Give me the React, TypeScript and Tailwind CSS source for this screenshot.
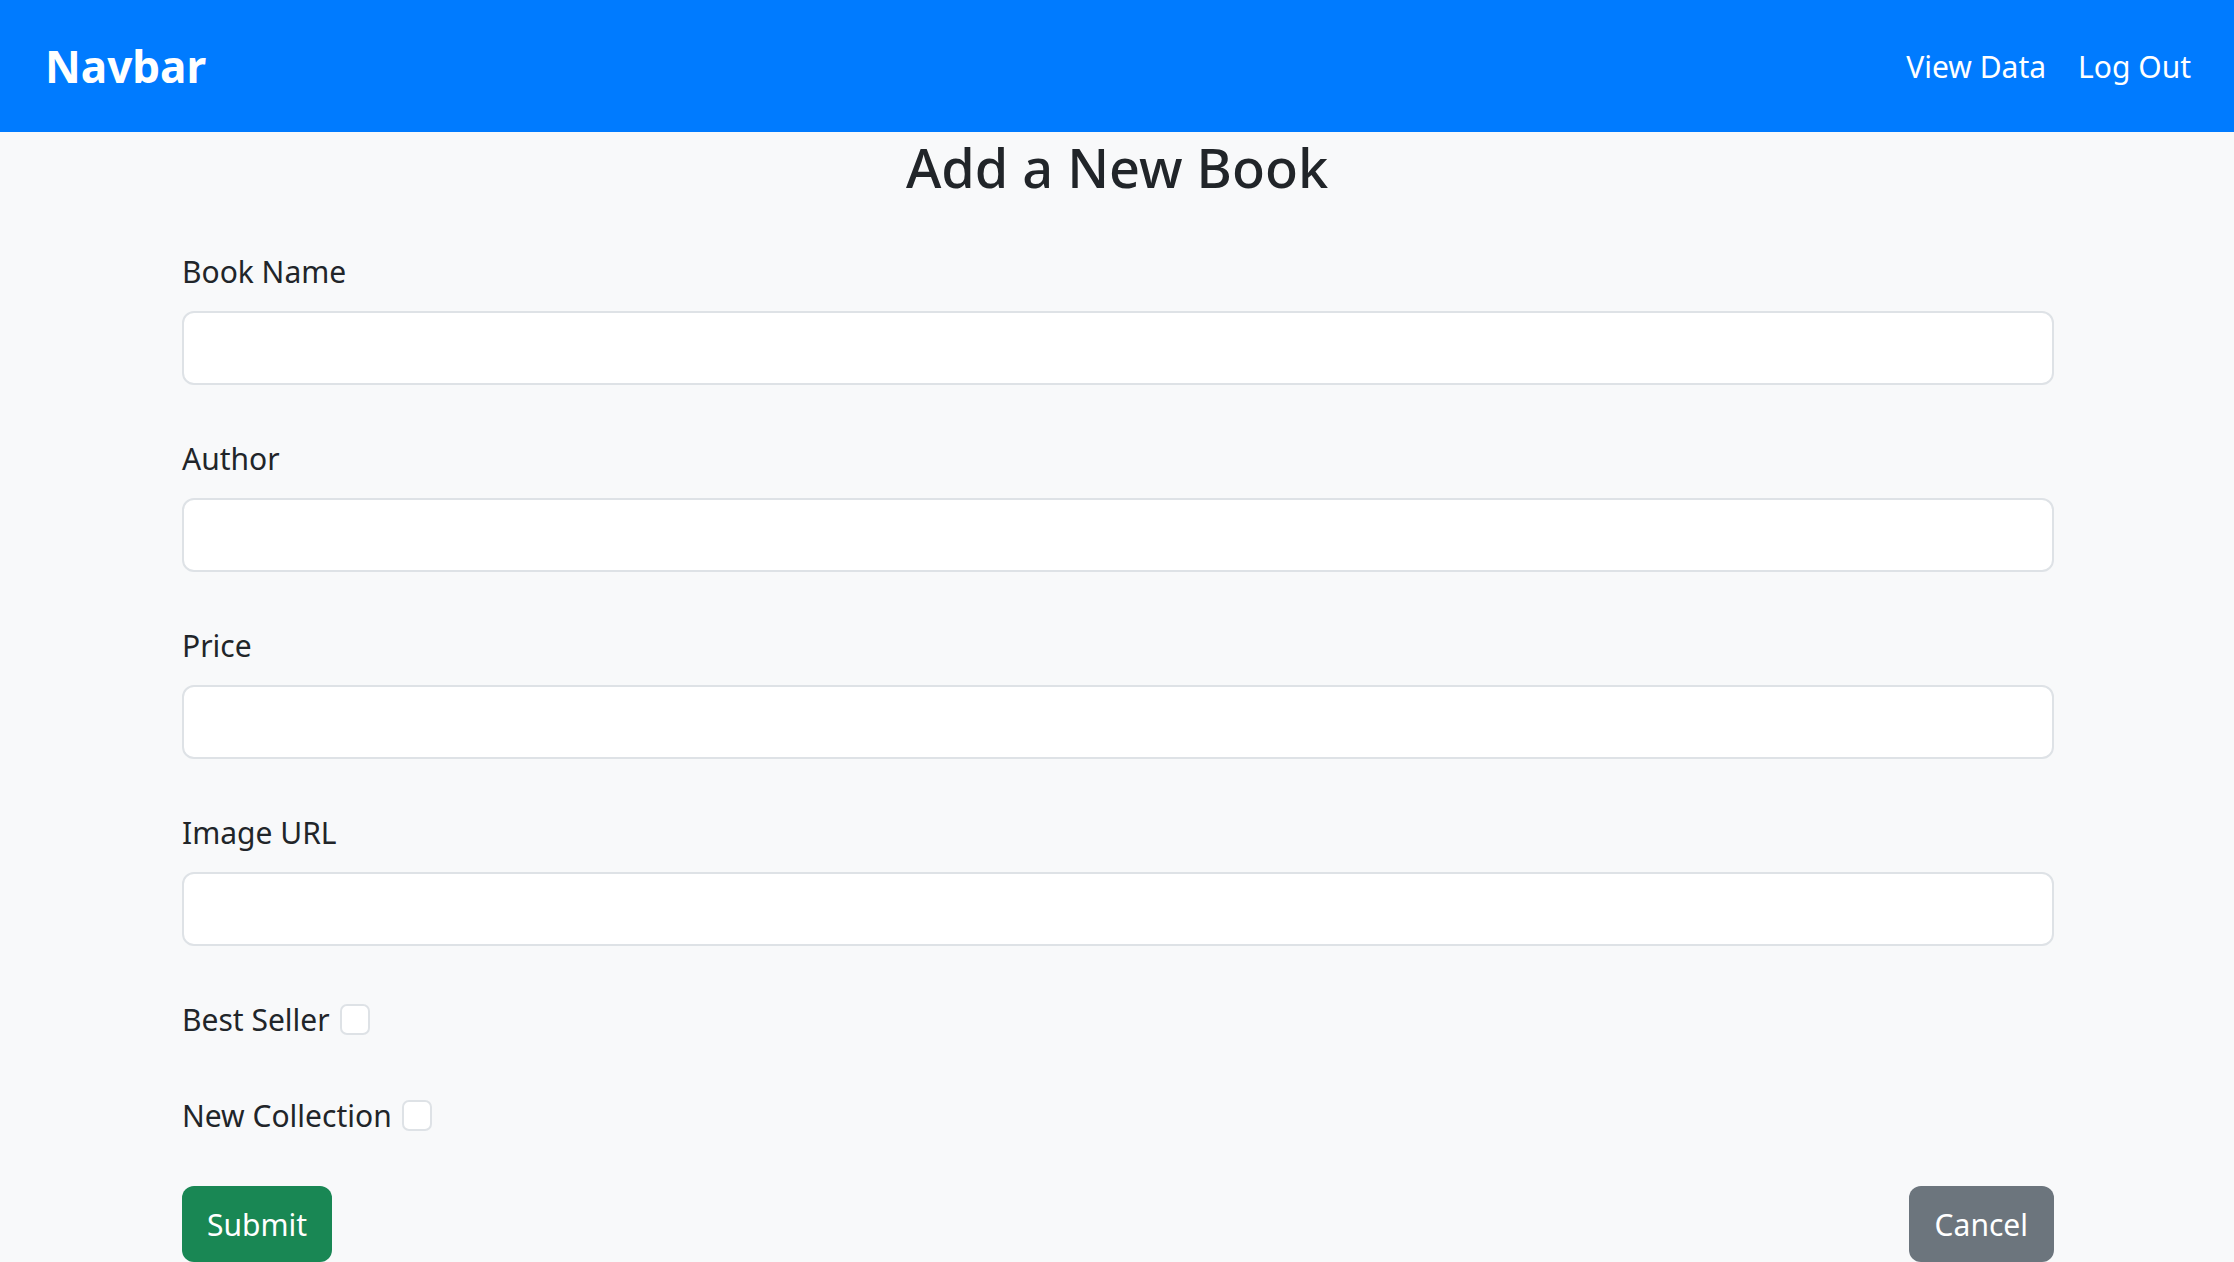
export default function App() {
  const fields = ["Book Name", "Author", "Price", "Image URL"];
  return (
    <div
      className="min-h-screen bg-[#f8f9fa] text-[#212529]"
      style={{ fontFamily: '"Noto Sans", "Open Sans", sans-serif' }}
    >
      <nav className="flex h-[132px] items-center justify-between bg-[#007bff] pl-[45px] pr-[27px]">
        <span className="text-[44px] font-bold leading-none text-white">Navbar</span>
        <div className="flex items-center">
          <a className="px-[16px] text-[30px] leading-[45px] text-white">View Data</a>
          <a className="px-[16px] text-[30px] leading-[45px] text-white">Log Out</a>
        </div>
      </nav>
      <h1 className="text-center text-[54px] font-medium leading-[70px]">Add a New Book</h1>
      <form className="flex flex-col pl-[182px] pr-[180px] pt-[47px]">
        {fields.map((f) => (
          <div key={f} className="mb-[51px] flex flex-col">
            <label className="mb-[17px] text-[30px] leading-[45px]">{f}</label>
            <input
              type="text"
              className="h-[74px] w-full rounded-[12px] border-2 border-[#dee2e6] bg-white px-[24px] text-[30px] outline-none"
            />
          </div>
        ))}
        <div className="mb-[51px] flex items-center text-[30px] leading-[45px]">
          <span>Best Seller</span>
          <span className="ml-[10px] inline-block h-[31px] w-[30px] rounded-[7px] border-2 border-[#dee2e6] bg-white" />
        </div>
        <div className="mb-[48px] flex items-center text-[30px] leading-[45px]">
          <span>New Collection</span>
          <span className="ml-[10px] inline-block h-[31px] w-[30px] rounded-[7px] border-2 border-[#dee2e6] bg-white" />
        </div>
        <div className="flex items-start justify-between">
          <button
            type="button"
            className="h-[76px] rounded-[12px] bg-[#198754] px-[25px] text-[30px] leading-[45px] text-white"
          >
            Submit
          </button>
          <button
            type="button"
            className="h-[76px] rounded-[12px] bg-[#6c757d] px-[26px] text-[30px] leading-[45px] text-white"
          >
            Cancel
          </button>
        </div>
      </form>
    </div>
  );
}
